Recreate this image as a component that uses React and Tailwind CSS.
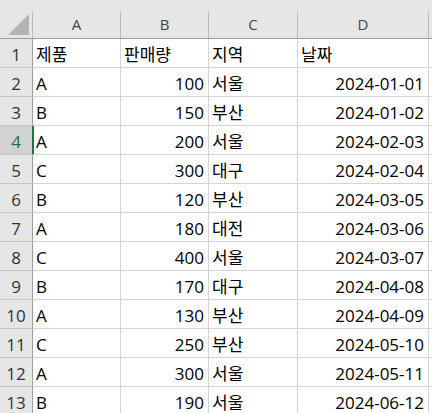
import React from 'react';

const rows = [
  ['제품', '판매량', '지역', '날짜'],
  ['A', 100, '서울', '2024-01-01'],
  ['B', 150, '부산', '2024-01-02'],
  ['A', 200, '서울', '2024-02-03'],
  ['C', 300, '대구', '2024-02-04'],
  ['B', 120, '부산', '2024-03-05'],
  ['A', 180, '대전', '2024-03-06'],
  ['C', 400, '서울', '2024-03-07'],
  ['B', 170, '대구', '2024-04-08'],
  ['A', 130, '부산', '2024-04-09'],
  ['C', 250, '부산', '2024-05-10'],
  ['A', 300, '서울', '2024-05-11'],
  ['B', 190, '서울', '2024-06-12'],
];

const cols = ['A', 'B', 'C', 'D'];
const gridCols = 'grid grid-cols-[33px_88px_88px_89px_131px_1fr]';
const font = { fontFamily: '"Open Sans", "Noto Sans CJK KR", sans-serif' };

const App = () => {
  return (
    <div className="w-[432px] h-[413px] overflow-hidden bg-white" style={font}>
      {/* top strip + column letters */}
      <div className="bg-[#e6e6e6] pt-[11px]">
        <div className={`${gridCols} h-[28px] border-b border-[#9e9e9e]`}>
          <div className="relative border-r border-[#bdbdbd]">
            <svg className="absolute left-[8px] top-[3px]" width="21" height="21" viewBox="0 0 21 21">
              <polygon points="21,0 21,21 0,21" fill="#b4b4b4" />
            </svg>
          </div>
          {cols.map((c) => (
            <div
              key={c}
              className="flex items-center justify-center border-r border-[#bdbdbd] text-[15px] leading-none text-[#444]"
            >
              {c}
            </div>
          ))}
          <div />
        </div>
      </div>

      {rows.map((r, i) => {
        const n = i + 1;
        const active = n === 4;
        return (
          <div key={n} className={`${gridCols} h-[29px]`}>
            <div
              className={`flex items-center justify-center pt-[2px] border-b border-r text-[17px] leading-none ${
                active
                  ? 'bg-[#d2d2d2] text-[#217346] border-b-[#c6c6c6] border-r-[#217346]'
                  : 'bg-[#e6e6e6] text-[#333] border-b-[#c6c6c6] border-r-[#9e9e9e]'
              }`}
            >
              {n}
            </div>
            {r.map((v, j) => {
              const right = typeof v === 'number' || (n > 1 && j === 3);
              return (
                <div
                  key={j}
                  className={`flex items-center pt-[2px] border-b border-r border-[#d4d4d4] text-[17px] leading-none text-black whitespace-nowrap overflow-hidden ${
                    right ? 'justify-end pr-[4px]' : 'justify-start pl-[3px]'
                  } ${active && j === 0 ? 'shadow-[inset_1px_0_0_#217346]' : ''}`}
                >
                  {v}
                </div>
              );
            })}
            <div className="border-b border-[#d4d4d4]" />
          </div>
        );
      })}
    </div>
  );
};

export default App;
